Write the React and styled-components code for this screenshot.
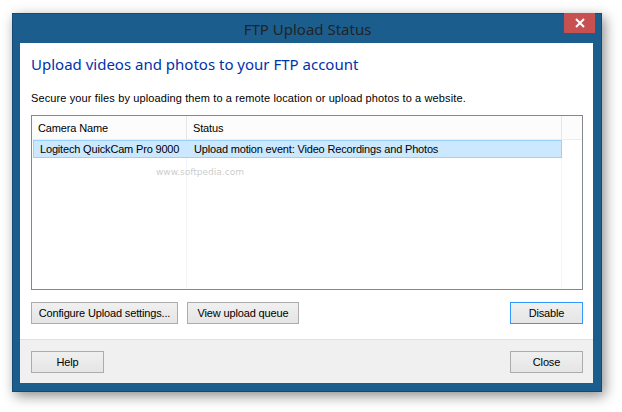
import React from "react"
import styled, { createGlobalStyle } from "styled-components"

const GlobalStyle = createGlobalStyle`
  html, body {
    margin: 0;
    padding: 0;
    background: #ffffff;
  }
  body {
    width: 622px;
    height: 412px;
    overflow: hidden;
    font-family: "Liberation Sans", Arial, sans-serif;
  }
`

const Page = styled.div`
  padding: 13px 0 0 12px;
`

const Window = styled.div`
  width: 590px;
  height: 379px;
  box-sizing: border-box;
  background: #1b5e8e;
  border: 1px solid #154a72;
  padding: 0 8px 8px 7px;
  display: flex;
  flex-direction: column;
  box-shadow: 3px 4px 12px rgba(0, 0, 0, 0.45);
`

const TitleBar = styled.div`
  height: 29px;
  position: relative;
  display: flex;
  align-items: center;
  justify-content: center;
`

const Title = styled.span`
  font-family: "Noto Sans", "Open Sans", sans-serif;
  font-size: 15px;
  color: #232323;
  margin-left: 2px;
`

const CloseX = styled.button`
  position: absolute;
  top: -1px;
  right: -2px;
  width: 31px;
  height: 20px;
  border: none;
  padding: 0;
  background: #c75050;
  display: flex;
  align-items: center;
  justify-content: center;
`

const Client = styled.div`
  flex: 1;
  display: flex;
  flex-direction: column;
  background: #ffffff;
`

const Content = styled.div`
  flex: 1;
  padding: 10px 10px 0 11px;
  display: flex;
  flex-direction: column;
`

const Heading = styled.h1`
  margin: 0;
  font-family: "Noto Sans", "Open Sans", sans-serif;
  font-weight: normal;
  font-size: 15px;
  line-height: 22px;
  color: #0033aa;
`

const Description = styled.p`
  margin: 16px 0 0;
  font-size: 11px;
  line-height: 14px;
  letter-spacing: 0.12px;
  color: #000000;
`

const List = styled.div`
  margin-top: 10px;
  height: 175px;
  box-sizing: border-box;
  border: 1px solid #828790;
  position: relative;
  display: grid;
  grid-template-columns: 155px 375px 1fr;
  grid-template-rows: 24px 18px 1fr;
  overflow: hidden;
`

const HeaderCell = styled.div`
  background: #fcfcfc;
  border-bottom: 1px solid #e8eef5;
  border-right: 1px solid ${(p) => (p.$last ? "transparent" : "#e5e5e5")};
  font-size: 11px;
  letter-spacing: -0.15px;
  color: #000;
  display: flex;
  align-items: center;
  padding-left: ${(p) => p.$pad}px;
`

const SelectedRow = styled.div`
  grid-column: 1 / 3;
  margin-left: 1px;
  display: grid;
  grid-template-columns: 154px 375px;
  background: #cce8ff;
  border: 1px solid #99d1ff;
  box-sizing: border-box;
  height: 18px;
  position: relative;
  z-index: 1;
`

const RowCell = styled.div`
  font-size: 11px;
  line-height: 16px;
  letter-spacing: -0.17px;
  color: #000;
  padding-left: ${(p) => p.$pad}px;
  white-space: nowrap;
`

const BodyColumn = styled.div`
  grid-row: ${(p) => p.$row};
  border-right: 1px solid ${(p) => (p.$last ? "transparent" : "#f2f4f7")};
`

const Watermark = styled.div`
  position: absolute;
  pointer-events: none;
  left: ${(p) => p.$x}px;
  top: ${(p) => p.$y}px;
  font-size: ${(p) => p.$size}px;
  font-weight: ${(p) => p.$weight || "normal"};
  letter-spacing: ${(p) => p.$spacing || 0}px;
  color: rgba(150, 150, 150, ${(p) => p.$alpha});
  font-family: "DejaVu Sans", sans-serif;
`

const ButtonRow = styled.div`
  margin-top: 12px;
  display: flex;
  gap: 9px;
`

const Button = styled.button`
  height: 22px;
  width: ${(p) => p.$w || 73}px;
  padding: 0;
  box-sizing: border-box;
  background: linear-gradient(#f0f0f0, #e5e5e5);
  border: 1px solid ${(p) => (p.$default ? "#3399ff" : "#acacac")};
  font-family: "Liberation Sans", Arial, sans-serif;
  font-size: 11px;
  letter-spacing: -0.15px;
  color: #000;
  white-space: nowrap;
  margin-left: ${(p) => (p.$push ? "auto" : "0")};
`

const Footer = styled.div`
  height: 44px;
  box-sizing: border-box;
  background: #f0f0f0;
  border-top: 1px solid #dfdfdf;
  padding: 11px 10px 0 11px;
  display: flex;
  justify-content: space-between;
  align-items: flex-start;
`

export default function App() {
  return (
    <>
      <GlobalStyle />
      <Page>
        <Window>
          <TitleBar>
            <Title>FTP Upload Status</Title>
            <CloseX aria-label="Close">
              <svg width="10" height="10" viewBox="0 0 10 10">
                <path d="M1 1 L9 9 M9 1 L1 9" stroke="#ffffff" strokeWidth="2" />
              </svg>
            </CloseX>
          </TitleBar>
          <Client>
            <Content>
              <Heading>Upload videos and photos to your FTP account</Heading>
              <Description>
                Secure your files by uploading them to a remote location or upload photos to a website.
              </Description>
              <List>
                <HeaderCell $pad={6}>Camera Name</HeaderCell>
                <HeaderCell $pad={6}>Status</HeaderCell>
                <HeaderCell $last />
                <SelectedRow>
                  <RowCell $pad={6}>Logitech QuickCam Pro 9000</RowCell>
                  <RowCell $pad={6}>Upload motion event: Video Recordings and Photos</RowCell>
                </SelectedRow>
                <div />
                <BodyColumn $row={3} />
                <BodyColumn $row={3} />
                <BodyColumn $row={3} $last />
                <Watermark $x={124} $y={51} $size={9} $alpha={0.5}>
                  www.softpedia.com
                </Watermark>
              </List>
              <ButtonRow>
                <Button $w={147}>Configure Upload settings...</Button>
                <Button $w={112}>View upload queue</Button>
                <Button $default $push>Disable</Button>
              </ButtonRow>
            </Content>
            <Footer>
              <Button>Help</Button>
              <Button>Close</Button>
            </Footer>
          </Client>
        </Window>
      </Page>
    </>
  )
}
